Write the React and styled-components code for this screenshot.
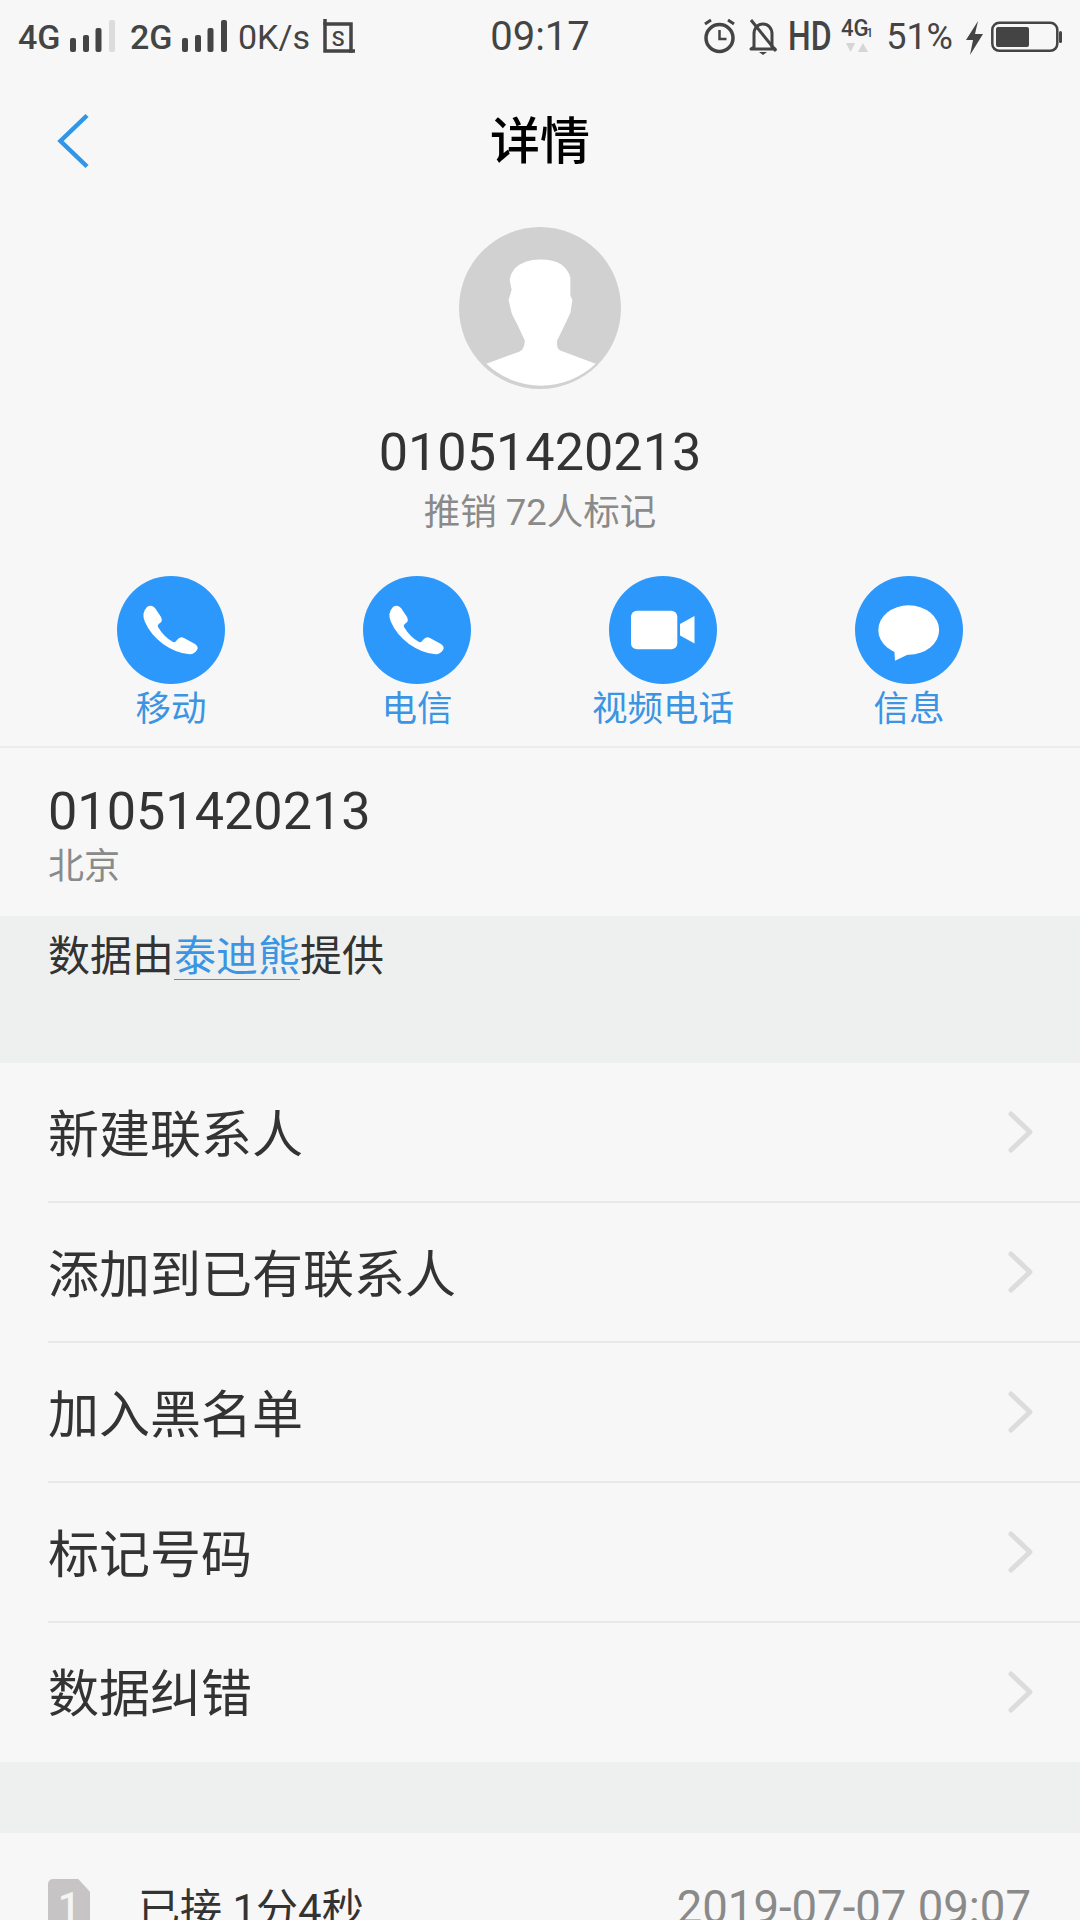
import React from "react";
import styled, { createGlobalStyle } from "styled-components";

const FONT = `Roboto, "Noto Sans CJK SC", sans-serif`;

const Global = createGlobalStyle`
  html, body { margin: 0; padding: 0; background: #f7f7f7; }
  * { box-sizing: border-box; }
`;

const Page = styled.div`
  width: 1080px;
  height: 1920px;
  overflow: hidden;
  background: #f7f7f7;
  font-family: ${FONT};
  color: #333;
`;

const StatusBar = styled.div`
  height: 74px;
  display: grid;
  grid-template-columns: 1fr auto 1fr;
  align-items: center;
  padding: 0 18px;
  color: #444;
`;
const StatusLeft = styled.div`
  display: flex;
  align-items: center;
`;
const StatusRight = styled.div`
  display: flex;
  align-items: center;
  justify-content: flex-end;
`;
const NetLabel = styled.span`
  font-size: 34px;
  font-weight: 500;
  line-height: 40px;
  width: 42px;
  margin-left: ${(p) => p.$ml || 0}px;
  white-space: nowrap;
`;
const Signal = styled.svg`
  display: block;
  width: 45px;
  height: 40px;
  margin-left: 10px;
  flex: none;
`;
const Speed = styled.span`
  font-size: 34px;
  line-height: 40px;
  margin-left: 11px;
  width: 72px;
  white-space: nowrap;
`;
const SIcon = styled.svg`
  display: block;
  width: 34px;
  height: 36px;
  margin-left: 11px;
`;
const Clock = styled.span`
  font-size: 40px;
  line-height: 44px;
  color: #444;
`;
const TinyIcon = styled.svg`
  display: block;
  flex: none;
  width: ${(p) => p.$w}px;
  height: 40px;
  margin-left: ${(p) => p.$ml}px;
`;
const HdWrap = styled.span`
  display: block;
  width: 44px;
  margin-left: 10px;
  height: 40px;
  font-size: 40px;
  line-height: 40px;
  font-weight: 500;
`;
const Hd = styled.span`
  display: inline-block;
  transform: scaleX(0.8);
  transform-origin: left center;
`;
const NetBadge = styled.div`
  position: relative;
  width: 32px;
  height: 40px;
  margin-left: 9px;
`;
const NetBadgeText = styled.span`
  position: absolute;
  left: 0;
  top: 1px;
  font-size: 24px;
  line-height: 20px;
  font-weight: 500;
  transform: scaleX(0.92);
  transform-origin: left center;
  white-space: nowrap;
`;
const NetBadgeSub = styled.span`
  position: absolute;
  right: 0;
  top: 10px;
  font-size: 12px;
  line-height: 12px;
  font-weight: 500;
`;
const NetArrows = styled.svg`
  position: absolute;
  left: 5px;
  top: 25px;
  width: 22px;
  height: 11px;
`;
const Percent = styled.span`
  font-size: 36px;
  line-height: 40px;
  margin-left: 13px;
`;

const Header = styled.div`
  height: 132px;
  position: relative;
  display: flex;
  align-items: center;
  justify-content: center;
  padding-top: 3px;
`;
const BackIcon = styled.svg`
  position: absolute;
  left: 50px;
  top: 32px;
  width: 44px;
  height: 64px;
`;
const Title = styled.h1`
  margin: 0;
  font-size: 50px;
  font-weight: 500;
  color: #000;
  line-height: 60px;
`;

const Profile = styled.section`
  display: flex;
  flex-direction: column;
  align-items: center;
  padding-top: 22px;
  padding-bottom: 18px;
  border-bottom: 2px solid #ececec;
`;
const Avatar = styled.svg`
  display: block;
  width: 162px;
  height: 162px;
  margin: -1px 0;
`;
const BigNumber = styled.div`
  font-size: 52.2px;
  line-height: 60px;
  color: #333;
`;
const ProfileNumber = styled(BigNumber)`
  margin-top: 35px;
`;
const Tag = styled.div`
  margin-top: 8px;
  font-size: 36.5px;
  line-height: 44px;
  color: #8a8a8a;
  white-space: pre;
`;
const Actions = styled.div`
  margin-top: 41px;
  width: 100%;
  padding: 0 48px;
  display: grid;
  grid-template-columns: repeat(4, 246px);
`;
const Action = styled.div`
  display: flex;
  flex-direction: column;
  align-items: center;
`;
const ActionCircle = styled.svg`
  display: block;
  width: 108px;
  height: 108px;
`;
const ActionLabel = styled.span`
  margin-top: 5px;
  margin-bottom: -1px;
  font-size: 35.5px;
  line-height: 40px;
  color: #3b95e3;
`;

const NumberBlock = styled.section`
  padding: 34px 48px 27px;
`;
const Location = styled.div`
  margin-top: 3px;
  font-size: 36px;
  line-height: 44px;
  color: #8a8a8a;
`;

const Band = styled.section`
  background: #eef0f0;
  height: ${(p) => p.$h}px;
  padding: ${(p) => p.$pad || "0"};
`;
const Credit = styled.div`
  font-size: 42px;
  line-height: 50px;
  color: #333;
`;
const CreditLink = styled.span`
  display: inline-block;
  color: #3b95e3;
  height: 48px;
  border-bottom: 1px solid #3b95e3;
`;

const MenuRow = styled.div`
  position: relative;
  height: 140px;
  display: flex;
  align-items: center;
  justify-content: space-between;
  padding: 0 43px 2px 48px;
  font-size: 51px;
  color: #333;
  &:last-child {
    height: 139px;
  }
  &:not(:last-child)::after {
    content: "";
    position: absolute;
    left: 48px;
    right: 0;
    bottom: 0;
    height: 2px;
    background: #e9e9e9;
  }
`;
const MenuText = styled.span`
  margin-top: -3px;
`;
const Chevron = styled.svg`
  display: block;
  width: 30px;
  height: 44px;
`;

const CallRow = styled.div`
  padding: 46px 49px 0 48px;
  display: flex;
  align-items: flex-start;
`;
const SimIcon = styled.div`
  width: 42px;
  height: 58px;
  background: #c7c4c6;
  border-radius: 5px;
  clip-path: polygon(0 0, 72% 0, 100% 22%, 100% 100%, 0 100%);
  color: #f4f4f4;
  font-size: 40px;
  font-weight: 500;
  line-height: 58px;
  text-align: center;
`;
const CallText = styled.div`
  margin-left: 48px;
  margin-top: 6px;
  font-size: 42px;
  line-height: 50px;
  color: #333;
  white-space: pre;
`;
const CallDate = styled.div`
  margin-left: auto;
  margin-top: 4px;
  font-size: 45.5px;
  line-height: 50px;
  color: #8a8a8a;
  white-space: nowrap;
`;

const PhoneGlyph = () => (
  <path
    fill="#fff"
    d="M30 31 Q34 28 38 32 L44 41 Q46 45 43 47 Q40 49 41 51 Q47 61 56 66 Q58 67 60 64 Q63 60 67 62 L78 68 Q82 71 80 74 Q77 79 71 78 Q59 77 46 68 Q33 58 28 46 Q24 37 30 31 Z"
  />
);
const VideoGlyph = () => (
  <>
    <rect x="22" y="34.7" width="46.3" height="38.6" rx="6" fill="#fff" />
    <polygon points="71,48 85.5,40 85.5,67.5 71,59.5" fill="#fff" />
  </>
);
const MessageGlyph = () => (
  <>
    <ellipse cx="53.7" cy="54" rx="30.4" ry="24.7" fill="#fff" />
    <polygon points="39,70 40,84.7 54,78" fill="#fff" />
  </>
);

const actions = [
  { label: "移动", glyph: <PhoneGlyph /> },
  { label: "电信", glyph: <PhoneGlyph /> },
  { label: "视频电话", glyph: <VideoGlyph /> },
  { label: "信息", glyph: <MessageGlyph /> },
];
const menu = ["新建联系人", "添加到已有联系人", "加入黑名单", "标记号码", "数据纠错"];

const SignalBars = ({ dim }) => (
  <Signal viewBox="0 0 45 40">
    <rect x="0" y="21" width="6" height="14" rx="2" fill="#444" />
    <rect x="13" y="18" width="6" height="17" rx="2" fill="#444" />
    <rect x="25.5" y="11" width="6" height="24" rx="2" fill="#444" />
    <rect x="39" y="3" width="6" height="32" rx="2" fill={dim ? "#dcdcdc" : "#444"} />
  </Signal>
);

export default function App() {
  return (
    <Page>
      <Global />
      <StatusBar>
        <StatusLeft>
          <NetLabel>4G</NetLabel>
          <SignalBars dim />
          <NetLabel $ml={15}>2G</NetLabel>
          <SignalBars />
          <Speed>0K/s</Speed>
          <SIcon viewBox="0 0 34 36">
            <rect x="4" y="5" width="26" height="27" fill="none" stroke="#444" strokeWidth="3.5" />
            <path d="M4 0v6M28 32h6" stroke="#444" strokeWidth="3.5" fill="none" />
            <text x="17" y="26.5" textAnchor="middle" fontSize="21" fontWeight="500" fontFamily="Roboto, sans-serif" fill="#444">S</text>
          </SIcon>
        </StatusLeft>
        <Clock>09:17</Clock>
        <StatusRight>
          <TinyIcon $w={33} $ml={0} viewBox="0 0 33 40">
            <circle cx="16.5" cy="21" r="13.5" fill="none" stroke="#444" strokeWidth="3.5" />
            <path d="M16.5 13v9h7" fill="none" stroke="#444" strokeWidth="2.5" />
            <path d="M2 7l6-4M31 7l-6-4" fill="none" stroke="#444" strokeWidth="3" />
          </TinyIcon>
          <TinyIcon $w={30} $ml={12} viewBox="0 0 30 40">
            <path d="M6 30V17c0-6 4-10 9-10s9 4 9 10v13l3 2H3z" fill="none" stroke="#444" strokeWidth="3" strokeLinejoin="round" />
            <path d="M11 35h8l-4 3z" fill="#444" />
            <path d="M3 3l25 31" stroke="#444" strokeWidth="3" />
          </TinyIcon>
          <HdWrap><Hd>HD</Hd></HdWrap>
          <NetBadge>
            <NetBadgeText>4G</NetBadgeText>
            <NetBadgeSub>1</NetBadgeSub>
            <NetArrows viewBox="0 0 24 12">
              <polygon points="0,1 10,1 5,11" fill="#d6d6d6" />
              <polygon points="13,11 24,11 18.5,1" fill="#d6d6d6" />
            </NetArrows>
          </NetBadge>
          <Percent>51%</Percent>
          <TinyIcon $w={17} $ml={13} viewBox="0 0 17 40">
            <polygon points="12,4 0,23 7,23 4,38 17,17 9,17" fill="#444" />
          </TinyIcon>
          <TinyIcon $w={71} $ml={8} viewBox="0 0 71 40">
            <rect x="1.3" y="5.8" width="65" height="28" rx="7" fill="none" stroke="#444" strokeWidth="2.5" />
            <rect x="5" y="10" width="33" height="20" rx="2" fill="#444" />
            <rect x="68" y="14" width="3" height="12" rx="1.5" fill="#444" />
          </TinyIcon>
        </StatusRight>
      </StatusBar>

      <Header>
        <BackIcon viewBox="0 0 44 64">
          <path d="M37 9.5 L10.5 35 L37 60.5" fill="none" stroke="#2f96ea" strokeWidth="4.5" />
        </BackIcon>
        <Title>详情</Title>
      </Header>

      <Profile>
        <Avatar viewBox="0 0 160 160">
          <circle cx="80" cy="80" r="80" fill="#d1d1d1" />
          <path
            fill="#fff"
            d="M27 135 L60 123 Q65 120 65 112 L57 95 Q53 88 52 85 L49 72 L52 62 L50 52 Q51 46 55 41 Q64 32 80 32 Q94 32 101 37 Q108 42 110 50 L110 68 L112 72 L110 85 L97 112 Q96 120 100 122 L135 135 A78 78 0 0 1 27 135 Z"
          />
        </Avatar>
        <ProfileNumber>01051420213</ProfileNumber>
        <Tag>推销 72人标记</Tag>
        <Actions>
          {actions.map((a) => (
            <Action key={a.label}>
              <ActionCircle viewBox="0 0 108 108">
                <circle cx="54" cy="54" r="54" fill="#2d98fb" />
                {a.glyph}
              </ActionCircle>
              <ActionLabel>{a.label}</ActionLabel>
            </Action>
          ))}
        </Actions>
      </Profile>

      <NumberBlock>
        <BigNumber>01051420213</BigNumber>
        <Location>北京</Location>
      </NumberBlock>

      <Band $h={147} $pad="16px 48px 0">
        <Credit>
          数据由<CreditLink>泰迪熊</CreditLink>提供
        </Credit>
      </Band>

      <div>
        {menu.map((m) => (
          <MenuRow key={m}>
            <MenuText>{m}</MenuText>
            <Chevron viewBox="0 0 30 44">
              <path d="M4 4 L23 22 L4 40" fill="none" stroke="#dcdcdc" strokeWidth="5" strokeLinecap="round" strokeLinejoin="round" />
            </Chevron>
          </MenuRow>
        ))}
      </div>

      <Band $h={71} />

      <CallRow>
        <SimIcon>1</SimIcon>
        <CallText>已接 1分4秒</CallText>
        <CallDate>2019-07-07 09:07</CallDate>
      </CallRow>
    </Page>
  );
}
